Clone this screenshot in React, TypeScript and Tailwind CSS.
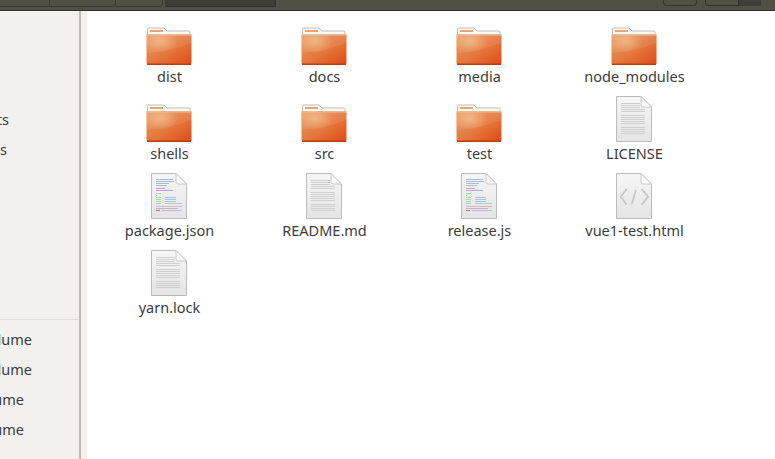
const font = { fontFamily: '"Noto Sans", sans-serif' };

type Kind = "folder" | "code" | "text" | "html";

const items: { name: string; kind: Kind }[] = [
  { name: "dist", kind: "folder" },
  { name: "docs", kind: "folder" },
  { name: "media", kind: "folder" },
  { name: "node_modules", kind: "folder" },
  { name: "shells", kind: "folder" },
  { name: "src", kind: "folder" },
  { name: "test", kind: "folder" },
  { name: "LICENSE", kind: "text" },
  { name: "package.json", kind: "code" },
  { name: "README.md", kind: "text" },
  { name: "release.js", kind: "code" },
  { name: "vue1-test.html", kind: "html" },
  { name: "yarn.lock", kind: "text" },
];

// x, y, width, colour of the little source lines on the code page
const codeLines: [number, number, number, string][] = [
  [5, 6, 17, "#a9bbd0"],
  [5, 8, 18, "#a9bbd0"],
  [5, 10, 13, "#a9bbd0"],
  [5, 12, 11, "#a9bbd0"],
  [5, 15, 9, "#dc9ccb"],
  [5, 17, 17, "#b0a8d8"],
  [5, 20, 5, "#a8d8a8"],
  [5, 22, 1, "#88cc88"],
  [5, 24, 5, "#a8d8a8"],
  [14, 24, 11, "#a4c4e0"],
  [5, 26, 5, "#a8d8a8"],
  [14, 26, 11, "#a4c4e0"],
  [5, 28, 5, "#a8d8a8"],
  [14, 28, 11, "#a4c4e0"],
  [5, 30, 5, "#a8d8a8"],
  [14, 30, 17, "#b4c6d8"],
  [5, 33, 26, "#d4b8c8"],
  [5, 35, 22, "#d8a8c4"],
  [5, 37, 4, "#e67070"],
  [11, 37, 20, "#a8c4dc"],
];

const textRows = [7, 9, 11, 13, 15, 19, 21, 23, 25, 27, 31, 33, 35, 37];

function Folder() {
  return (
    <svg width="46" height="38" viewBox="0 0 46 38">
      <defs>
        <linearGradient id="fb" x1="0" y1="0" x2="1" y2="1">
          <stop offset="0" stopColor="#ea9a62" />
          <stop offset="0.55" stopColor="#e5763c" />
          <stop offset="1" stopColor="#df4a16" />
        </linearGradient>
        <radialGradient id="fh" cx="0.3" cy="0.22" r="0.4">
          <stop offset="0" stopColor="#f2bd8a" stopOpacity="0.75" />
          <stop offset="1" stopColor="#f2bd8a" stopOpacity="0" />
        </radialGradient>
      </defs>
      <path d="M1.500 8V2a1 1 0 0 1 1-1H18l3 3h22a1 1 0 0 1 1 1v3z" fill="#fafafa" stroke="#bdbdbd" />
      <rect x="4" y="3" width="13" height="2" fill="#f0a470" />
      <path d="M0.500 7.500h45v28.500a1.500 1.500 0 0 1-1.500 1.500H2A1.500 1.500 0 0 1 0.500 36z" fill="url(#fb)" />
      <path d="M0.500 7.500h45v28.500a1.500 1.500 0 0 1-1.500 1.500H2A1.500 1.500 0 0 1 0.500 36z" fill="url(#fh)" />
      <path d="M1 26C15 25 30 22 45 16V8H1z" fill="#ffffff" opacity="0.08" />
      <rect x="1" y="36.500" width="44" height="1.500" fill="#b63d17" />
      <rect x="0.500" y="7.500" width="45" height="1" fill="#f3bd92" />
    </svg>
  );
}

function Doc({ kind }: { kind: Kind }) {
  return (
    <svg width="36" height="46" viewBox="0 0 36 46">
      <defs>
        <linearGradient id="pg" x1="0" y1="0" x2="0" y2="1">
          <stop offset="0" stopColor="#f6f6f6" />
          <stop offset="1" stopColor="#e4e4e4" />
        </linearGradient>
      </defs>
      <path d="M0.500 0.500H25L35.500 11V45.500H0.500z" fill="url(#pg)" stroke="#bcbcbc" />
      {kind === "code" &&
        codeLines.map(([x, y, w, c]) => (
          <rect key={`${x}-${y}`} x={x} y={y} width={w} height="1" fill={c} />
        ))}
      {kind === "text" &&
        textRows.map((y) => (
          <rect key={y} x="5" y={y} width={y < 12 ? 19 : 24} height="1" fill="#cfcfcf" />
        ))}
      {kind === "html" && (
        <g fill="none" stroke="#c6c6c6" strokeWidth="1.800">
          <path d="M10.700 16L4.700 23.700L10.700 31.700" />
          <path d="M20 17L15.700 31" />
          <path d="M25.700 16L32 23.700L25.700 31.700" />
        </g>
      )}
      <path d="M25 0.500V9a2 2 0 0 0 2 2h8.500z" fill="#fbfbfb" stroke="#c8c8c8" />
    </svg>
  );
}

function SideRow({ label, width }: { label: string; width: string }) {
  return (
    <div className={`flex h-[30px] items-center justify-end overflow-hidden whitespace-nowrap ${width}`}>
      {label}
    </div>
  );
}

export default function App() {
  return (
    <div className="flex h-[459px] w-[775px] flex-col overflow-hidden bg-white text-[14.5px] text-[#3c3c3c]" style={font}>
      {/* Header */}

      <div className="flex h-[11px] shrink-0 border-b border-[#35332c] bg-[#524f44]">
        <div className="flex h-[7px] w-[165px]">
          <div className="w-[50px] border-r border-b border-[#3a3831]" />
          <div className="w-[66px] rounded-br-[4px] border-r border-b border-[#3a3831]" />
          <div className="w-[47px] rounded-br-[4px] border-r border-b border-[#3a3831]" />
        </div>
        <div className="h-[7px] w-[111px] border-r border-b border-[#35332c] bg-[#3f3d35]" />
        <div className="h-[6px] w-[387px]" />
        <div className="h-[6px] w-[34px] rounded-b-[4px] border border-t-0 border-[#35332c]" />
        <div className="ml-[8px] h-[6px] w-[34px] rounded-bl-[4px] border border-t-0 border-[#35332c]" />
        <div className="h-[6px] w-[22px] bg-[#3f3d35]" />
      </div>

      <div className="flex min-h-0 flex-1">
        {/* Sidebar */}

        <aside className="w-[81px] shrink-0 border-r-2 border-[#bdbbb5] bg-[#f2f1f0] pt-[94px]">
          <SideRow label="Documents" width="w-[9px]" />
          <SideRow label="Videos" width="w-[7px]" />
          <div className="mt-[154px] border-t border-[#dfdeda] pt-[5px]">
            <SideRow label="16 GB Volume" width="w-[32px]" />
            <SideRow label="32 GB Volume" width="w-[32px]" />
            <SideRow label="Volume" width="w-[24px]" />
            <SideRow label="Volume" width="w-[24px]" />
          </div>
        </aside>

        <div className="w-[6px] shrink-0 bg-[#f2f1f0]" />

        {/* Files */}

        <main className="grid flex-1 auto-rows-[77px] grid-cols-[repeat(4,155px)] pt-[6px] pl-[5px]">
          {items.map((item) => (
            <div key={item.name} className="flex flex-col items-center">
              <div className="mr-[1px] flex h-[48px] items-end justify-center">
                {item.kind === "folder" ? <Folder /> : <Doc kind={item.kind} />}
              </div>
              <div className="flex h-[24px] items-center whitespace-nowrap">{item.name}</div>
            </div>
          ))}
        </main>
      </div>
    </div>
  );
}
